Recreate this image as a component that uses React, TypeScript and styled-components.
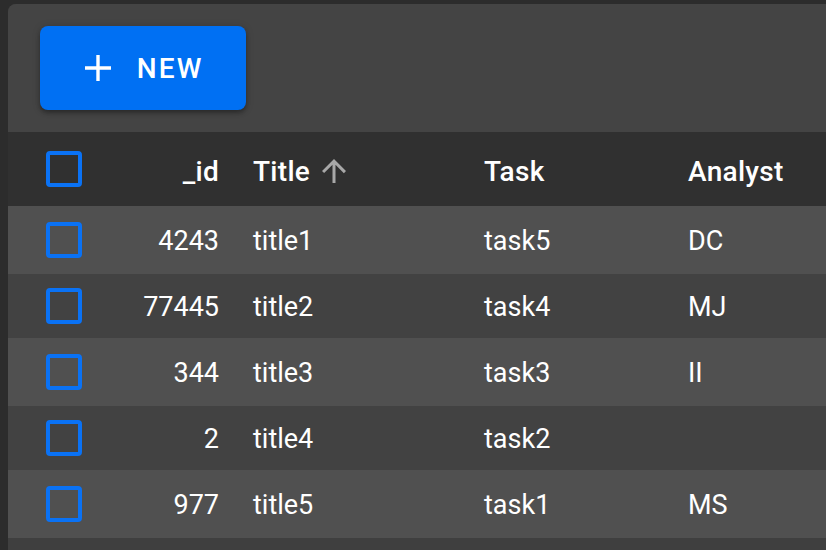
import React from "react";
import styled, { createGlobalStyle } from "styled-components";

type Row = { id: number; title: string; task: string; analyst: string };

const rows: Row[] = [
  { id: 4243, title: "title1", task: "task5", analyst: "DC" },
  { id: 77445, title: "title2", task: "task4", analyst: "MJ" },
  { id: 344, title: "title3", task: "task3", analyst: "II" },
  { id: 2, title: "title4", task: "task2", analyst: "" },
  { id: 977, title: "title5", task: "task1", analyst: "MS" },
];

const App: React.FC = () => {
  return (
    <>
      <GlobalStyle />
      <Page>
        <Card>
          <Toolbar>
            <NewButton type="button">
              <svg width="26" height="26" viewBox="0 0 26 26">
                <path d="M13 0v26M0 13h26" stroke="#fff" strokeWidth="3.4" fill="none" />
              </svg>
              <span>NEW</span>
            </NewButton>
          </Toolbar>
          <Grid>
            <HeaderRow>
              <CheckCell>
                <CheckBox />
              </CheckCell>
              <HeadCell $align="right">_id</HeadCell>
              <HeadCell>
                Title
                <SortIcon viewBox="0 0 24 24">
                  <path d="M4 12l1.41 1.41L11 7.83V20h2V7.83l5.58 5.59L20 12l-8-8-8 8z" />
                </SortIcon>
              </HeadCell>
              <HeadCell>Task</HeadCell>
              <HeadCell>Analyst</HeadCell>
            </HeaderRow>
            {rows.map((r, i) => (
              <DataRow key={r.id} $light={i % 2 === 0}>
                <CheckCell>
                  <CheckBox />
                </CheckCell>
                <Cell $align="right">{r.id}</Cell>
                <Cell>{r.title}</Cell>
                <Cell>{r.task}</Cell>
                <Cell>{r.analyst}</Cell>
              </DataRow>
            ))}
          </Grid>
        </Card>
      </Page>
    </>
  );
};

export default App;

const GlobalStyle = createGlobalStyle`
  html, body {
    margin: 0;
    padding: 0;
    background: #2c2c2c;
    overflow: hidden;
  }
  body {
    font-family: Roboto, "Liberation Sans", sans-serif;
    color: #fff;
  }
`;

const Page = styled.div`
  width: 826px;
  height: 550px;
  padding: 4px 0 0 8px;
  box-sizing: border-box;
  overflow: hidden;
`;

const Card = styled.div`
  width: 900px;
  height: 600px;
  background: #3f3f3f;
  border-radius: 8px 0 0 0;
  overflow: hidden;
`;

const Toolbar = styled.div`
  height: 128px;
  box-sizing: border-box;
  padding: 22px 0 0 32px;
  background: #444444;
`;

const NewButton = styled.button`
  width: 206px;
  height: 84px;
  display: flex;
  align-items: center;
  justify-content: center;
  gap: 26px;
  padding: 0;
  border: none;
  border-radius: 8px;
  background: #0070f3;
  color: #fff;
  font-family: Roboto, "Liberation Sans", sans-serif;
  font-size: 28px;
  font-weight: 500;
  box-shadow: 0 3px 4px rgba(0, 0, 0, 0.3), 0 1px 8px rgba(0, 0, 0, 0.15);
  cursor: pointer;

  svg {
    flex-shrink: 0;
  }

  span {
    letter-spacing: 2.2px;
    margin-right: -2.2px;
  }
`;

const Grid = styled.div`
  display: flex;
  flex-direction: column;
`;

const columns = "112px 115px 231px 204px 1fr";

const HeaderRow = styled.div`
  display: grid;
  grid-template-columns: ${columns};
  height: 74px;
  background: #303030;
`;

const DataRow = styled.div<{ $light: boolean }>`
  display: grid;
  grid-template-columns: ${columns};
  height: ${(p) => (p.$light ? "68px" : "64px")};
  background: ${(p) => (p.$light ? "#505050" : "#424242")};
`;

const CheckCell = styled.div`
  display: flex;
  align-items: center;
  padding-left: 38px;
`;

const CheckBox = styled.span`
  display: block;
  width: 36px;
  height: 36px;
  box-sizing: border-box;
  border: 4px solid #0a72f5;
  border-radius: 4px;
`;

const Cell = styled.div<{ $align?: "left" | "right" }>`
  display: flex;
  align-items: center;
  justify-content: ${(p) => (p.$align === "right" ? "flex-end" : "flex-start")};
  padding: 2px 16px 0 18px;
  font-size: 27px;
  white-space: nowrap;
`;

const HeadCell = styled(Cell)`
  padding-top: 4px;
  font-size: 28px;
  font-weight: 500;
  letter-spacing: 0.3px;
`;

const SortIcon = styled.svg`
  width: 36px;
  height: 36px;
  margin-left: 6px;
  fill: #a8a8a8;
`;
